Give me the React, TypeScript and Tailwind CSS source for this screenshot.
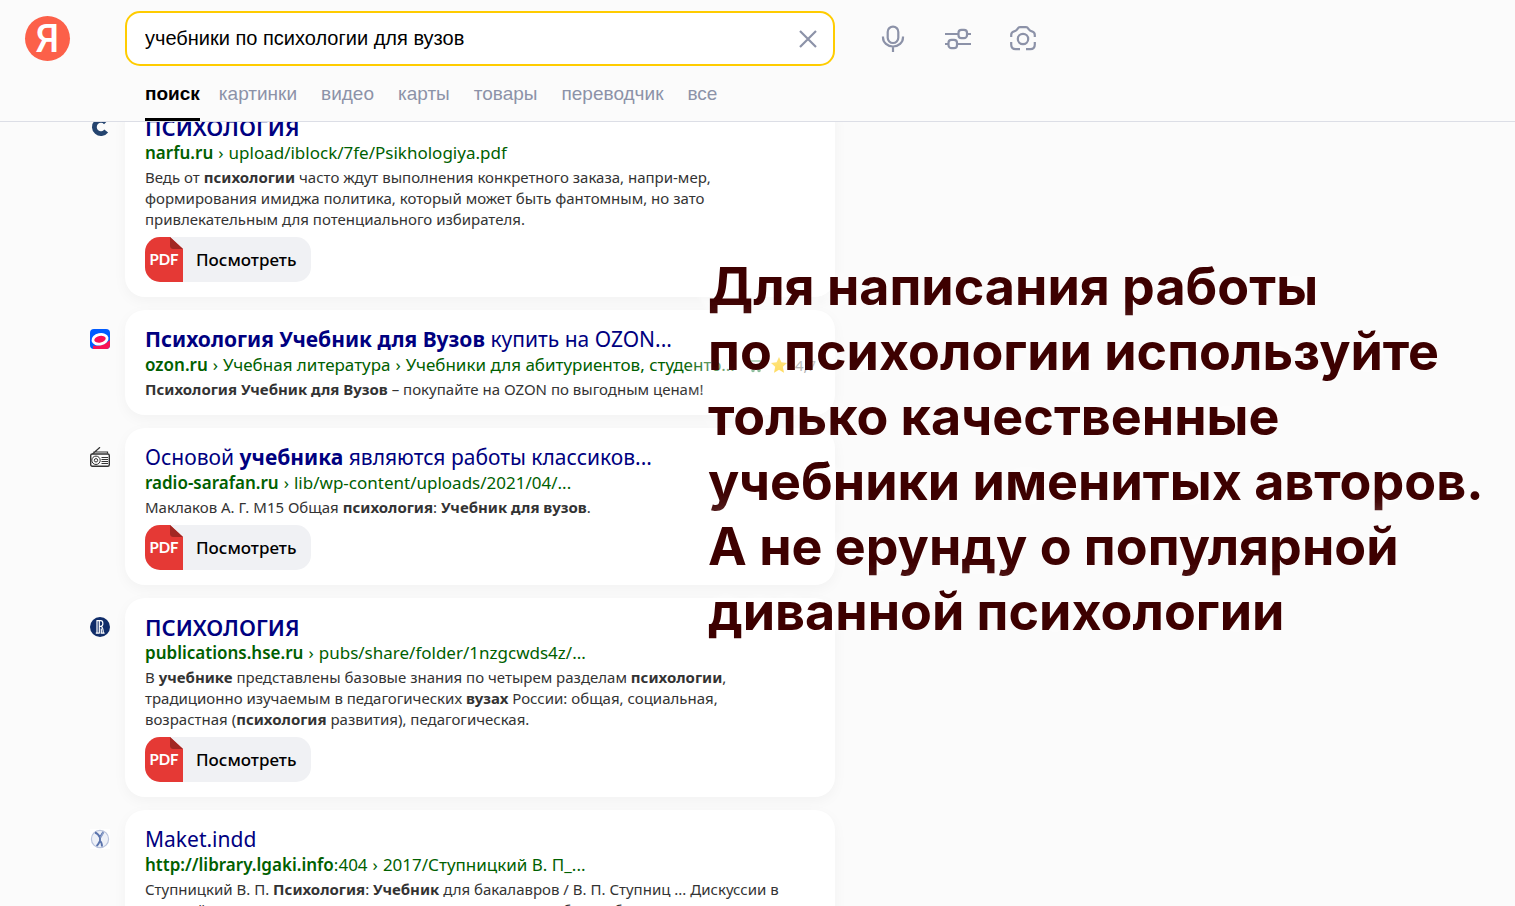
import type { ReactNode } from "react";

type Result = {
  icon: ReactNode;
  title: ReactNode;
  host: string;
  port?: string;
  path: string[];
  snippet: ReactNode;
  pdf?: boolean;
  rating?: string;
};

function ArcIcon() {
  return (
    <svg viewBox="0 0 20 20" className="size-5" aria-hidden="true">
      <path d="M16.800 5.500a6.600 6.600 0 1 0 .4 8.500" fill="none" stroke="#24446f" strokeWidth="4.800" transform="translate(-1 0)" />
    </svg>
  );
}

function OzonIcon() {
  return (
    <svg viewBox="0 0 20 20" className="size-5" aria-hidden="true">
      <clipPath id="ozon-clip">
        <rect width="20" height="20" rx="4" />
      </clipPath>
      <g clipPath="url(#ozon-clip)">
        <rect width="20" height="20" fill="#005bff" />
        <path d="M3 20v-3.500c5 1.500 12-.500 17-5.500v9z" fill="#f91155" />
        <ellipse cx="10" cy="10.300" rx="7.200" ry="4.700" fill="#f91155" stroke="#fff" strokeWidth="2.800" transform="rotate(-12 10 10.300)" />
      </g>
    </svg>
  );
}

function RadioIcon() {
  return (
    <svg viewBox="0 0 20 20" className="size-5" aria-hidden="true" fill="none" stroke="#333">
      <path d="M2.500 7 10 .2M4 6.500V5h13.500v1.500" strokeWidth="1.200" />
      <rect x=".7" y="7" width="18.600" height="12.300" rx="1.500" strokeWidth="1.400" />
      <circle cx="6" cy="13.300" r="4.200" />
      <circle cx="6" cy="13.300" r="1.700" />
      <path d="M11.500 10.500H18M11.500 12.500H18M11.500 14.500H18M11.500 16.500H18" strokeWidth="1" />
    </svg>
  );
}

function HseIcon() {
  return (
    <svg viewBox="0 0 20 20" className="size-5" aria-hidden="true">
      <circle cx="10" cy="10" r="10" fill="#102d69" />
      <path d="M7 16.500V3.600h3.800c2.600 0 2.800 5.200.200 5.700 2 .4 2.200 3 2.400 7.200M9.300 3.600v12.900M9.300 9.300h1.700M11.300 16.500v-5M5.800 16.200h3.700M10.600 16.200h4" fill="none" stroke="#fff" strokeWidth="1.200" />
    </svg>
  );
}

function LibraryIcon() {
  return (
    <svg viewBox="0 0 20 20" className="size-5" aria-hidden="true">
      <rect width="20" height="20" fill="#fff" />
      <circle cx="10" cy="10" r="8.600" fill="#eef1f8" stroke="#b9c3dc" strokeWidth="1.200" />
      <path d="M5 3.500c3 1 4 3 5 5 1-2 2-4 3.500-5.500M10 8.500v3.500c-1 2-2 4-3.500 5M10 12c1.500 1 2 3 2 5.500" fill="none" stroke="#5b74ad" strokeWidth="1.900" />
      <path d="M13.500 3c-1 3-2 4-3 5.500" stroke="#8fa2cb" strokeWidth="1.500" fill="none" />
    </svg>
  );
}

const results: Result[] = [
  {
    icon: <ArcIcon />,
    title: <b className="text-[22px] font-semibold">ПСИХОЛОГИЯ</b>,
    host: "narfu.ru",
    path: ["upload/iblock/7fe/Psikhologiya.pdf"],
    snippet: (
      <>
        Ведь от <b>психологии</b> часто ждут выполнения конкретного заказа, напри-мер,
        <br />
        формирования имиджа политика, который может быть фантомным, но зато
        <br />
        привлекательным для потенциального избирателя.
      </>
    ),
    pdf: true,
  },
  {
    icon: <OzonIcon />,
    title: (
      <>
        <b>Психология Учебник для Вузов</b> купить на OZON...
      </>
    ),
    host: "ozon.ru",
    path: ["Учебная литература", "Учебники для абитуриентов, студенто..."],
    snippet: (
      <>
        <b>Психология Учебник для Вузов</b> – покупайте на OZON по выгодным ценам!
      </>
    ),
    rating: "4,7",
  },
  {
    icon: <RadioIcon />,
    title: (
      <>
        Основой <b>учебника</b> являются работы классиков...
      </>
    ),
    host: "radio-sarafan.ru",
    path: ["lib/wp-content/uploads/2021/04/..."],
    snippet: (
      <>
        Маклаков А. Г. М15 Общая <b>психология</b>: <b>Учебник для вузов</b>.
      </>
    ),
    pdf: true,
  },
  {
    icon: <HseIcon />,
    title: <b className="text-[22px] font-semibold">ПСИХОЛОГИЯ</b>,
    host: "publications.hse.ru",
    path: ["pubs/share/folder/1nzgcwds4z/..."],
    snippet: (
      <>
        В <b>учебнике</b> представлены базовые знания по четырем разделам <b>психологии</b>,
        <br />
        традиционно изучаемым в педагогических <b>вузах</b> России: общая, социальная,
        <br />
        возрастная (<b>психология</b> развития), педагогическая.
      </>
    ),
    pdf: true,
  },
  {
    icon: <LibraryIcon />,
    title: "Maket.indd",
    host: "http://library.lgaki.info",
    port: ":404",
    path: ["2017/Ступницкий В. П_..."],
    snippet: (
      <>
        Ступницкий В. П. <b>Психология</b>: <b>Учебник</b> для бакалавров / В. П. Ступниц ... Дискуссии в
        <br />
        научной литературе о предмете психологии и её методе были обусловлены
      </>
    ),
  },
];

function PdfButton() {
  return (
    <button type="button" className="mt-[7px] flex h-[45px] items-center overflow-hidden rounded-[15px] bg-[#f0f1f4] pr-[15px] text-[17px] font-medium text-black">
      <svg viewBox="0 0 38 45" className="mr-[13px] h-[45px] w-[38px]" aria-hidden="true">
        <path d="M0 0h25l13 12v33H0z" fill="#e53935" />
        <path d="M25 0v8c0 3 1 4 4 4h9z" fill="#a12723" />
        <text x="19" y="28" textAnchor="middle" fill="#fff" fontSize="15" fontWeight="700" fontFamily="Lato, sans-serif">
          PDF
        </text>
      </svg>
      Посмотреть
    </button>
  );
}

function ResultCard({ result }: { result: Result }) {
  return (
    <li className="flex">
      <div className="w-[125px] shrink-0 pt-[19px] pl-[90px]">{result.icon}</div>
      <article className="w-full max-w-[710px] rounded-[20px] bg-white px-5 pt-4 pb-[15px] whitespace-nowrap shadow-[0_4px_14px_rgba(0,0,0,0.04)]">
        <h2 className="h-[26px] text-[21px] leading-[26px] text-[#000080]">
          <a href="#">{result.title}</a>
        </h2>
        <div className="flex h-[27px] items-start text-[17px] leading-[26px] text-[#006000]">
          <a href="#">
            <b className="font-semibold">{result.host}</b>
            {result.port}
            {result.path.map((part) => (
              <span key={part}>
                <span className="mx-[5px]">›</span>
                {part}
              </span>
            ))}
          </a>
          {result.rating && (
            <span className="ml-3 flex h-[26px] items-center gap-2 text-[15px] text-[#777]">
              <svg viewBox="0 0 16 16" className="size-4" fill="none" stroke="#2e8b4a" strokeWidth="1.500" aria-hidden="true">
                <path d="M0 2h3l2 8h8l2-6H4" />
                <circle cx="6" cy="13.500" r="1" />
                <circle cx="12" cy="13.500" r="1" />
              </svg>
              <svg viewBox="0 0 16 16" className="size-4" aria-hidden="true">
                <path d="m8 0 2.400 5.300 5.600.6-4.200 3.900 1.200 5.900L8 12.700l-5 3 1.200-5.900L0 5.900l5.600-.6z" fill="#fc0" />
              </svg>
              {result.rating}
            </span>
          )}
        </div>
        <p className="text-[15px] leading-[21px] text-[#333]">{result.snippet}</p>
        {result.pdf && <PdfButton />}
      </article>
    </li>
  );
}

function Header() {
  return (
    <header className="relative z-10 flex h-[122px] shrink-0 border-b border-[#dcdee6] bg-[#fbfbfb] font-['Liberation_Sans',sans-serif]">
      <div className="w-[125px] shrink-0 pt-4 pl-[25px]">
        <a href="#" className="flex size-[45px] items-center justify-center rounded-full bg-[#fc6049] font-['Roboto',sans-serif] text-[38px] leading-none font-medium text-white">
          Я
        </a>
      </div>
      <div className="flex w-full max-w-[710px] flex-col justify-between pt-[11px]">
        <form className="flex h-[55px] items-center rounded-[15px] border-2 border-[#fc0] bg-white pr-4 pl-[18px]">
          <input aria-label="Запрос" defaultValue="учебники по психологии для вузов" className="min-w-0 grow bg-transparent pb-[2px] text-[20px] text-black outline-none" />
          <button type="button" aria-label="Очистить">
            <svg viewBox="0 0 18 18" className="size-[18px]" fill="none" stroke="#8c92a8" strokeWidth="2.200" aria-hidden="true">
              <path d="m1 1 16 16M17 1 1 17" />
            </svg>
          </button>
        </form>
        <nav className="flex h-[52px] gap-6 pl-5 text-[19px] leading-[50px] text-[#8c92a8]">
          <a href="#" className="-mr-[5px] border-b-3 border-black font-bold text-black">поиск</a>
          <a href="#">картинки</a>
          <a href="#">видео</a>
          <a href="#">карты</a>
          <a href="#">товары</a>
          <a href="#">переводчик</a>
          <a href="#">все</a>
        </nav>
      </div>
      <div className="flex h-[78px] items-center gap-[37px] pl-11 text-[#8c92a8]">
        <button type="button" aria-label="Голосовой поиск">
          <svg viewBox="0 0 28 28" className="size-7" fill="none" stroke="currentColor" strokeWidth="2.200" aria-hidden="true">
            <rect x="8.700" y="1.600" width="10.600" height="16.400" rx="5.300" />
            <path d="M4 11.500v1a10 9 0 0 0 20 0v-1M14 21.500v5.500" />
          </svg>
        </button>
        <button type="button" aria-label="Настройки">
          <svg viewBox="0 0 28 28" className="size-7" fill="none" stroke="currentColor" strokeWidth="2.200" aria-hidden="true">
            <path d="M1 9h13M23 9h4M1 19h4M14 19h13" />
            <rect x="14.500" y="4.800" width="8.500" height="8.400" rx="3" />
            <rect x="4.500" y="14.800" width="8.500" height="8.400" rx="3" />
          </svg>
        </button>
        <button type="button" aria-label="Поиск по картинке">
          <svg viewBox="0 0 28 28" className="size-7" fill="none" stroke="currentColor" strokeWidth="2.200" aria-hidden="true">
            <circle cx="14" cy="14" r="5.200" />
            <path d="M2.200 12V10c0-2 1-3.200 3-3.700 2-.4 2.200-.8 3-2S9.500 2.200 11 2.200h6c1.500 0 2 .9 2.800 2.100s1 1.600 3 2c2 .5 3 1.700 3 3.700v2M2.200 17v2.500c0 3 1.500 4.700 4.500 4.700H11M25.800 17v2.500c0 3-1.500 4.700-4.500 4.700H17" />
          </svg>
        </button>
      </div>
    </header>
  );
}

const captionLines = [
  "Для написания работы",
  "по психологии используйте",
  "только качественные",
  "учебники именитых авторов.",
  "А не ерунду о популярной",
  "диванной психологии",
];

export default function App() {
  return (
    <div className="relative flex h-screen flex-col overflow-hidden bg-[#fbfbfb] font-['Noto_Sans',sans-serif]">
      <Header />
      <main className="min-h-0 grow">
        <ul className="-mt-6 flex flex-col gap-[13px]">
          {results.map((result, i) => (
            <ResultCard key={i} result={result} />
          ))}
        </ul>
      </main>
      <p className="absolute top-[254px] left-[708px] z-20 font-['Inter',sans-serif] text-[52px] leading-[65px] font-bold whitespace-nowrap text-[#3d0000] [text-shadow:0_0_28px_#fff,0_0_40px_#fff,0_0_40px_#fff]">
        {captionLines.map((line) => (
          <span key={line} className="block">
            {line}
          </span>
        ))}
      </p>
    </div>
  );
}
